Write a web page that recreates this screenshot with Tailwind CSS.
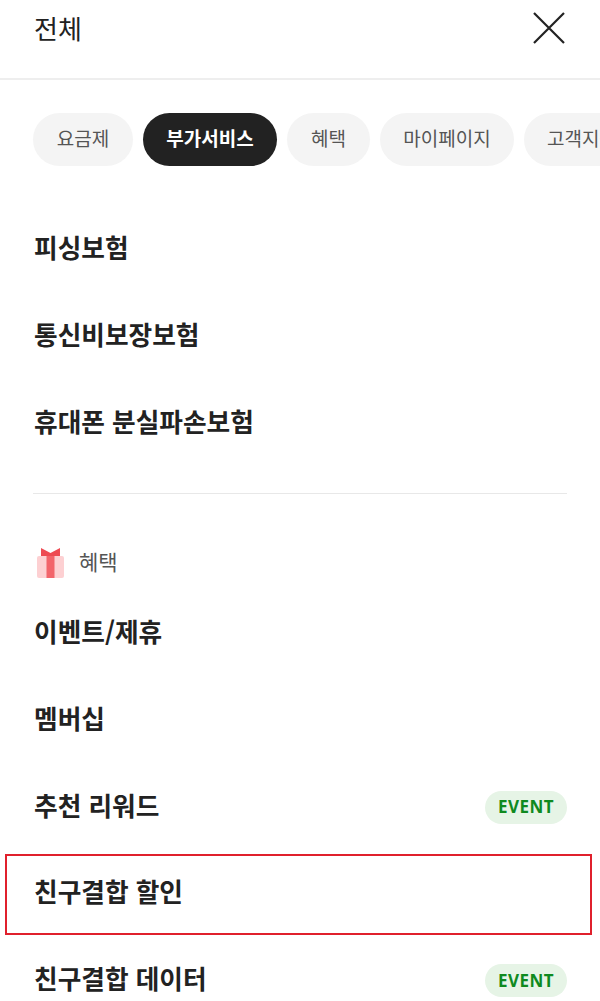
<!DOCTYPE html>
<html lang="ko">
<head>
    <meta charset="UTF-8">
    <meta name="viewport" content="width=device-width, initial-scale=1.0">
    <title>전체</title>
    <script src="https://cdn.jsdelivr.net/npm/@tailwindcss/browser@4"></script>
</head>
<body class="bg-white font-['Noto_Sans_CJK_KR','Noto_Sans',sans-serif] text-[#222]">
    <div class="relative w-[600px] h-[1001px] overflow-hidden">
        <header class="flex items-center justify-between h-[80px] pb-[23px] pl-[34px] pr-[34px] border-b-2 border-[#eeeeee]">
            <h1 class="text-[26px] leading-[36px] font-normal">전체</h1>
            <svg class="w-[34px] h-[34px]" viewBox="0 0 34 34" fill="none" stroke="#222" stroke-width="2.2">
                <path d="M2 2 L32 32 M32 2 L2 32"/>
            </svg>
        </header>

        <nav class="flex gap-[10px] pl-[33px] mt-[33px] whitespace-nowrap text-[19px] text-[#555]">
            <a class="flex items-center justify-center shrink-0 w-[100px] h-[53px] pb-[2px] rounded-full bg-[#f4f4f4]">요금제</a>
            <a class="flex items-center justify-center shrink-0 w-[134px] h-[53px] pb-[2px] rounded-full bg-[#222] text-white font-bold">부가서비스</a>
            <a class="flex items-center justify-center shrink-0 w-[83px] h-[53px] pb-[2px] rounded-full bg-[#f4f4f4]">혜택</a>
            <a class="flex items-center justify-center shrink-0 w-[134px] h-[53px] pb-[2px] rounded-full bg-[#f4f4f4]">마이페이지</a>
            <a class="flex items-center justify-center shrink-0 w-[116px] h-[53px] pb-[2px] rounded-full bg-[#f4f4f4]">고객지원</a>
        </nav>

        <ul class="mt-[37px] px-[34px] text-[25.7px] font-bold leading-[87px]">
            <li class="h-[87px]">피싱보험</li>
            <li class="h-[87px]">통신비보장보험</li>
            <li class="h-[87px]">휴대폰 분실파손보험</li>
        </ul>

        <hr class="mx-[33px] mt-[29px] border-t border-[#e8e8e8]">

        <div class="flex items-center gap-[14px] pl-[34px] mt-[50px] h-[36px] text-[21px] text-[#555]">
            <svg class="w-[31px] h-[31px]" viewBox="0 0 31 31">
                <rect x="3" y="9" width="27" height="22" rx="2" fill="#fdd0d2"/>
                <rect x="12.5" y="7" width="8" height="24" fill="#f2646a"/>
                <path d="M7 1 L16.5 6 L26 1 L26 9 L7 9 Z" fill="#ee4a52"/>
            </svg>
            <span>혜택</span>
        </div>

        <ul class="mt-[8px] pl-[34px] pr-[33px] text-[25.7px] font-bold leading-[86.75px]">
            <li class="h-[86.75px]">이벤트/제휴</li>
            <li class="h-[86.75px]">멤버십</li>
            <li class="flex items-center justify-between h-[86.75px]">
                <span>추천 리워드</span>
                <span class="flex items-center justify-center mt-[5px] w-[82px] h-[33px] rounded-full bg-[#e6f4e6] text-[#0f8a1f] text-[17px] font-bold tracking-[0.5px] font-['Noto_Sans',sans-serif]">EVENT</span>
            </li>
            <li class="h-[86.75px]">친구결합 할인</li>
            <li class="flex items-center justify-between h-[86.75px]">
                <span>친구결합 데이터</span>
                <span class="flex items-center justify-center mt-[5px] w-[82px] h-[33px] rounded-full bg-[#e6f4e6] text-[#0f8a1f] text-[17px] font-bold tracking-[0.5px] font-['Noto_Sans',sans-serif]">EVENT</span>
            </li>
        </ul>

        <div class="absolute left-[5px] top-[854px] w-[587px] h-[81px] border-2 border-[#e0202c]"></div>
    </div>
</body>
</html>
